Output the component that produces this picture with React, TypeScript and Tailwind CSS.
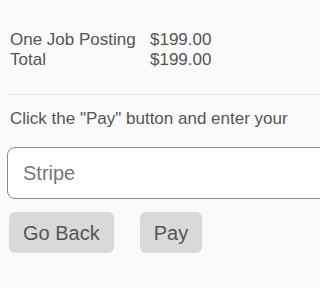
export default function App() {
  const rows = [
    { label: "One Job Posting", amount: "$199.00" },
    { label: "Total", amount: "$199.00" },
  ];

  return (
    <div className="min-h-screen w-full overflow-hidden bg-[#fafafa] pt-[30px] font-['Liberation_Sans',Arial,sans-serif] text-[#555]">
      {/* Order summary */}
      <div className="pl-[10px] text-[17px] leading-[20px]">
        {rows.map((row) => (
          <div key={row.label} className="grid grid-cols-[140px_auto] whitespace-nowrap">
            <span>{row.label}</span>
            <span>{row.amount}</span>
          </div>
        ))}
      </div>

      <hr className="mt-[24px] ml-[7px] border-0 border-t border-[#e4e4e4]" />

      <p className="mt-[14px] whitespace-nowrap pl-[10px] text-[17px] leading-[20px]">
        Click the "Pay" button and enter your
      </p>

      {/* Payment method */}
      <div className="mt-[18px] ml-[7px] mr-[-20px]">
        <input
          readOnly
          value="Stripe"
          className="box-border h-[52px] w-full rounded-[8px] border border-[#8a8a8a] bg-white px-[15px] text-[20px] text-[#777] outline-none"
        />
      </div>

      <div className="mt-[13px] ml-[9px] flex gap-[26px]">
        <button className="h-[41px] rounded-[6px] bg-[#d9d9d9] px-[14px] text-[20px] text-[#555]">
          Go Back
        </button>
        <button className="h-[41px] rounded-[6px] bg-[#d9d9d9] px-[14px] text-[20px] text-[#555]">
          Pay
        </button>
      </div>
    </div>
  );
}
